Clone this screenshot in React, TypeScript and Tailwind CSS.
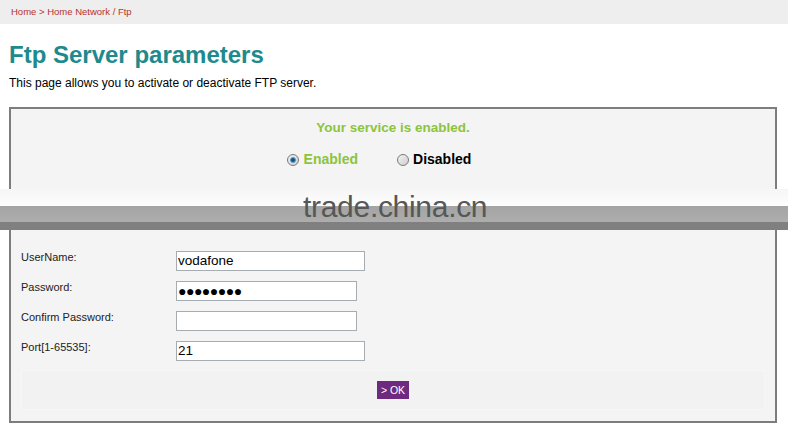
export default function App() {
  return (
    <div className="relative w-[788px] h-[434px] bg-white font-['Liberation_Sans',Arial,sans-serif] overflow-hidden">
      {/* breadcrumb */}
      <div className="h-[24px] bg-[#eeeeee] flex items-center pl-[11px] text-[9.5px] text-[#b8332f]">
        Home &gt; Home Network / Ftp
      </div>

      <h1 className="mt-[17px] ml-[9px] text-[24px] leading-[28px] font-bold text-[#1d8a8d]">
        Ftp Server parameters
      </h1>
      <p className="mt-[7px] ml-[9px] text-[12px] leading-[14px] text-black">
        This page allows you to activate or deactivate FTP server.
      </p>

      {/* main box */}
      <div className="mt-[17px] ml-[9px] w-[768px] h-[316px] border-2 border-[#7d7d7d] bg-[#f4f4f4] flex flex-col">
        <div className="h-[122px] flex flex-col items-center">
          <div className="mt-[11px] text-[13.5px] leading-[15px] font-bold text-[#8cc43c]">
            Your service is enabled.
          </div>
          <div className="mt-[14px] mr-[28px] flex items-center gap-[39px] text-[14px] font-bold">
            <label className="flex items-center gap-[5px] text-[#8cc43c]">
              <Radio checked />
              Enabled
            </label>
            <label className="flex items-center gap-[4px] text-black">
              <Radio />
              Disabled
            </label>
          </div>
        </div>

        <div className="pt-[20px] pl-[10px] flex flex-col gap-[10px] text-[11px] text-[#222]">
          <Row label="UserName:" value="vodafone" width="w-[189px]" />
          <Row label="Password:" value="●●●●●●●●" width="w-[181px]" dots />
          <Row label="Confirm Password:" value="" width="w-[181px]" />
          <Row label="Port[1-65535]:" value="21" width="w-[189px]" />
        </div>

        <div className="mt-[9px] mx-[10px] h-[40px] bg-[#f2f2f2] border border-[#f6f6f6] flex items-center justify-center">
          <button className="h-[18px] px-[4px] bg-[#6d2a7f] text-white text-[10.5px] leading-none">
            &gt; OK
          </button>
        </div>
      </div>

      {/* watermark band overlay */}
      <div className="absolute left-0 top-[189px] w-full h-[41px] flex flex-col">
        <div className="h-[17px] bg-gradient-to-b from-[#f6f6f6] to-[#fdfdfd]" />
        <div className="h-[16px] bg-gradient-to-b from-[#a4a4a4] to-[#adadad]" />
        <div className="h-[8px] bg-[#808080]" />
        <div className="absolute left-[303px] top-[1px] text-[30px] leading-[34px] text-[#575757] tracking-[-0.3px]">
          trade.china.cn
        </div>
      </div>
    </div>
  );
}

function Radio({ checked }: { checked?: boolean }) {
  return (
    <span className="w-[12px] h-[12px] rounded-full border border-[#7a7a7a] bg-gradient-to-br from-[#f2f2f2] to-[#cfcfcf] flex items-center justify-center">
      {checked && <span className="w-[6px] h-[6px] rounded-full bg-[#1f4f73] border border-[#4aa3d6]" />}
    </span>
  );
}

function Row({
  label,
  value,
  width,
  dots,
}: {
  label: string;
  value: string;
  width: string;
  dots?: boolean;
}) {
  return (
    <div className="flex items-center h-[20px]">
      <div className="w-[155px] -mt-[8px]">{label}</div>
      <input
        readOnly
        value={value}
        className={`${width} h-[20px] border border-[#a5acb2] bg-white px-[1px] outline-none text-black ${
          dots ? "text-[14px] tracking-[-0.5px]" : "text-[13.5px]"
        } font-['Liberation_Sans',Arial,sans-serif]`}
      />
    </div>
  );
}
